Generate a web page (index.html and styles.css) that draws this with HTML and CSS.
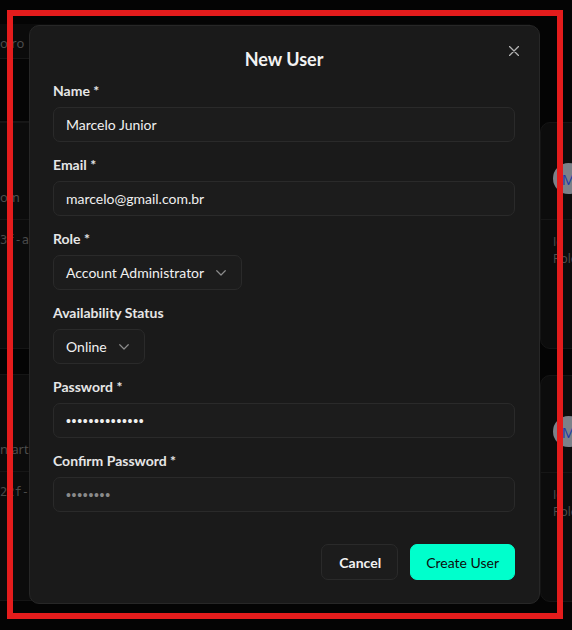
FILE: index.html
```html
<!DOCTYPE html>
<html lang="en">
<head>
<meta charset="utf-8">
<title>New User</title>
<link rel="stylesheet" href="styles.css">
</head>
<body>
<div class="page">
  <div class="col col-left">
    <div class="toolbar"><span class="bg-text">o ro</span></div>
    <div class="summary"></div>
    <div class="card list-card">
      <div class="row row-head"></div>
      <div class="row row-email"><span class="bg-text">om</span></div>
      <div class="row row-id"><span class="bg-mono">3f-a</span></div>
    </div>
    <div class="card list-card">
      <div class="row row-head"></div>
      <div class="row row-email"><span class="bg-text">n.art.br</span></div>
      <div class="row row-id"><span class="bg-mono">22f-a</span></div>
    </div>
  </div>
  <div class="col col-right">
    <div class="card user-card">
      <div class="user-top"><div class="avatar">M</div></div>
      <div class="user-body"><div class="bg-line">Id</div><div class="bg-line">Role</div></div>
    </div>
    <div class="card user-card">
      <div class="user-top"><div class="avatar">M</div></div>
      <div class="user-body"><div class="bg-line">Id</div><div class="bg-line">Role</div></div>
    </div>
  </div>
</div>

<div class="overlay">
  <div class="modal" role="dialog" aria-labelledby="modal-title">
    <button class="close" aria-label="Close">
      <svg width="10" height="10" viewBox="0 0 10 10"><path d="M0.5 0.5l9 9M9.5 0.5l-9 9" stroke="#b4b4b4" stroke-width="1.3" fill="none" stroke-linecap="round"/></svg>
    </button>
    <h2 id="modal-title" class="title">New User</h2>
    <form class="form">
      <div class="field">
        <label class="label">Name *</label>
        <input class="input" type="text" value="Marcelo Junior">
      </div>
      <div class="field">
        <label class="label">Email *</label>
        <input class="input" type="text" value="marcelo@gmail.com.br">
      </div>
      <div class="field">
        <label class="label">Role *</label>
        <div class="select"><span>Account Administrator</span>
          <svg width="10" height="6" viewBox="0 0 10 6"><path d="M0.75 0.75l4.25 4.25 4.25-4.25" stroke="#8c8c8c" stroke-width="1.2" fill="none" stroke-linecap="round" stroke-linejoin="round"/></svg>
        </div>
      </div>
      <div class="field">
        <label class="label">Availability Status</label>
        <div class="select"><span>Online</span>
          <svg width="10" height="6" viewBox="0 0 10 6"><path d="M0.75 0.75l4.25 4.25 4.25-4.25" stroke="#8c8c8c" stroke-width="1.2" fill="none" stroke-linecap="round" stroke-linejoin="round"/></svg>
        </div>
      </div>
      <div class="field">
        <label class="label">Password *</label>
        <input class="input input-secret" type="password" value="marcelo1234567">
      </div>
      <div class="field">
        <label class="label">Confirm Password *</label>
        <input class="input input-secret" type="password" placeholder="••••••••">
      </div>
    </form>
    <div class="actions">
      <button class="btn btn-cancel">Cancel</button>
      <button class="btn btn-primary">Create User</button>
    </div>
  </div>
</div>

<div class="frame"></div>
</body>
</html>
```
FILE: styles.css
```css
* { box-sizing: border-box; }

html, body {
  margin: 0;
  height: 100%;
}

body {
  background: #040404;
  font-family: "Lato", "Liberation Sans", sans-serif;
  overflow: hidden;
}

/* background page */
.page {
  display: flex;
  gap: 10px;
  margin-left: -6px;
  padding-top: 24px;
}

.col {
  display: flex;
  flex-direction: column;
}

.col-left {
  width: 536px;
  flex: none;
}

.col-right {
  width: 300px;
  flex: none;
  padding-top: 98px;
  gap: 26px;
}

.toolbar {
  height: 35px;
  background: #0b0b0b;
  border-bottom: 1px solid #171717;
  display: flex;
  align-items: center;
  padding: 3px 0 0 6px;
}

.summary {
  height: 63px;
  background: #050505;
  border-bottom: 1px solid #171717;
}

.card {
  background: #0c0c0c;
  border: 1px solid #151515;
  border-radius: 8px;
}

.list-card {
  border-radius: 0;
  border-left: 0;
  display: flex;
  flex-direction: column;
  height: 227px;
  margin-bottom: 25px;
}

.row {
  display: flex;
  align-items: center;
  padding-left: 6px;
  border-bottom: 1px solid #161616;
}

.row-head { height: 62px; border-bottom: 0; }
.row-email { height: 35px; padding-bottom: 10px; }
.row-id { height: 40px; border-bottom: 0; }

.bg-text {
  font-family: "Open Sans", sans-serif;
  font-size: 13px;
  color: #505050;
}

.bg-mono {
  font-family: "DejaVu Sans Mono", monospace;
  font-size: 12px;
  color: #4a4a4a;
}

.user-card {
  height: 227px;
  display: flex;
  flex-direction: column;
  border-radius: 10px;
}

.user-top {
  height: 97px;
  padding: 40px 0 0 12px;
  border-bottom: 1px solid #161616;
}

.avatar {
  width: 31px;
  height: 31px;
  border-radius: 50%;
  background: #7c8189;
  color: #1f3aa5;
  font-family: "Open Sans", sans-serif;
  font-size: 15px;
  display: flex;
  align-items: center;
  justify-content: center;
}

.user-body {
  display: flex;
  flex-direction: column;
  padding: 13px 0 0 12px;
}

.bg-line {
  font-family: "Open Sans", sans-serif;
  font-size: 12px;
  line-height: 17px;
  color: #505050;
}

/* modal */
.overlay {
  position: fixed;
  inset: 0;
  display: flex;
  align-items: flex-start;
  justify-content: center;
  padding: 25px 3px 0 0;
}

.modal {
  position: relative;
  width: 511px;
  background: #1a1a1a;
  border: 1px solid #272727;
  border-radius: 10px;
  padding: 21px 24px 23px 23px;
  color: #ececec;
}

.close {
  position: absolute;
  top: 19px;
  right: 19px;
  width: 12px;
  height: 12px;
  padding: 1px;
  border: 0;
  background: none;
  display: flex;
}

.title {
  margin: 0 0 10px;
  text-align: center;
  font-size: 18px;
  line-height: 24px;
  font-weight: 700;
  color: #f2f2f2;
}

.form {
  display: flex;
  flex-direction: column;
  gap: 13px;
}

.field {
  display: flex;
  flex-direction: column;
  align-items: flex-start;
  gap: 6px;
}

.label {
  font-size: 14px;
  line-height: 20px;
  font-weight: 700;
  color: #e6e6e6;
}

.input {
  width: 100%;
  height: 35px;
  background: #1c1c1c;
  border: 1px solid #2a2a2a;
  border-radius: 7px;
  padding: 0 12px;
  font-family: inherit;
  font-size: 14px;
  color: #f0f0f0;
  outline: none;
}

.input-secret {
  font-family: "Liberation Sans", sans-serif;
  letter-spacing: 0.7px;
}

.input::placeholder {
  color: #8a8a8a;
}

.select {
  height: 35px;
  display: inline-flex;
  align-items: center;
  gap: 12px;
  padding: 0 15px 0 12px;
  background: #1c1c1c;
  border: 1px solid #2a2a2a;
  border-radius: 7px;
  font-size: 14px;
  color: #f0f0f0;
}

.actions {
  display: flex;
  justify-content: flex-end;
  gap: 12px;
  margin-top: 32px;
}

.btn {
  height: 36px;
  border-radius: 7px;
  font-family: inherit;
  font-size: 14px;
  padding: 0 16px;
  cursor: pointer;
}

.btn-cancel {
  background: #1c1c1c;
  border: 1px solid #2a2a2a;
  color: #f2f2f2;
  font-weight: 700;
  padding: 0 16px 0 17px;
}

.btn-primary {
  background: #00ffcc;
  border: 1px solid #00ffcc;
  color: #0d0d0d;
  font-weight: 400;
  padding: 0 15px;
}

.frame {
  position: fixed;
  left: 7px;
  top: 10px;
  width: 556px;
  height: 609px;
  border: 6px solid #e41c1c;
  pointer-events: none;
}
```
